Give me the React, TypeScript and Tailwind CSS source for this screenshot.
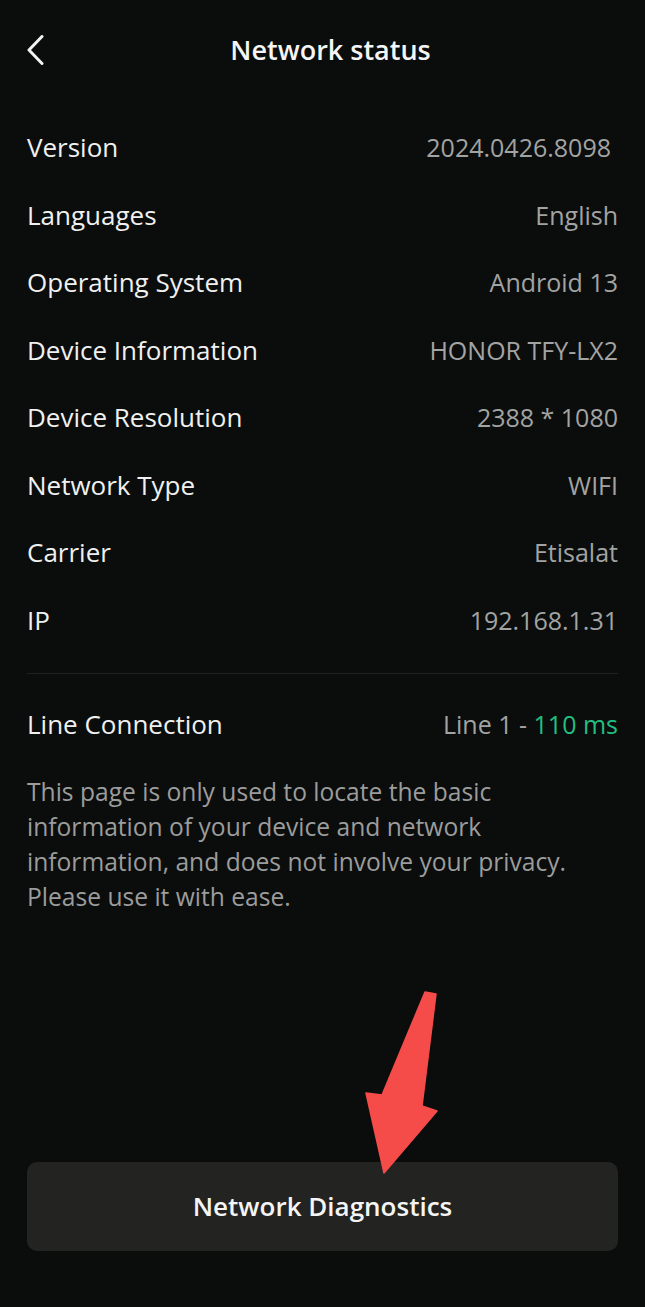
import React from "react";

const rows: Array<[string, string]> = [
  ["Version", "2024.0426.8098"],
  ["Languages", "English"],
  ["Operating System", "Android 13"],
  ["Device Information", "HONOR TFY-LX2"],
  ["Device Resolution", "2388 * 1080"],
  ["Network Type", "WIFI"],
  ["Carrier", "Etisalat"],
  ["IP", "192.168.1.31"],
];

export default function App() {
  return (
    <div
      className="relative flex min-h-[1307px] w-full flex-col bg-[#0a0d0b] px-[27px]"
      style={{ fontFamily: "'Open Sans', 'Noto Sans', sans-serif" }}
    >
      {/* Header */}
      <div className="relative flex h-[100px] items-center justify-center pl-[16px]">
        <svg
          className="absolute left-0 top-[35px]"
          width="20"
          height="30"
          viewBox="0 0 20 30"
          fill="none"
        >
          <path d="M15 1.5 L2 15 L15 28.5" stroke="#f2f2f2" strokeWidth="3" strokeLinecap="round" strokeLinejoin="round" />
        </svg>
        <h1 className="text-[27px] font-semibold text-[#f5f5f5]">Network status</h1>
      </div>

      {/* Info list */}
      <div className="flex flex-col pt-[14px]">
        {rows.map(([label, value], i) => (
          <div key={label} className="flex h-[67.5px] items-center justify-between">
            <span className="text-[26px] text-[#f0f0f0]">{label}</span>
            <span className={i === 0 ? "pr-[7px] text-[25px] text-[#a3a3a3]" : "text-[25px] text-[#a3a3a3]"}>
              {value}
            </span>
          </div>
        ))}
      </div>

      <div className="mt-[19px] h-px bg-[#1e211f]" />

      <div className="mt-[17px] flex h-[67.5px] items-center justify-between">
        <span className="text-[26px] text-[#f0f0f0]">Line Connection</span>
        <span className="text-[25px] text-[#a3a3a3]">
          Line 1 - <span className="text-[#22bf82]">110 ms</span>
        </span>
      </div>

      <p className="mt-[15px] max-w-[560px] text-[24.6px] leading-[35.3px] text-[#9c9c9c]">
        This page is only used to locate the basic information of your device and network information, and does not involve your privacy. Please use it with ease.
      </p>

      {/* Bottom action */}
      <div className="mt-auto pb-[56px]">
        <button className="flex h-[89px] w-full items-center justify-center rounded-[10px] bg-[#232422] text-[26px] font-semibold text-[#f5f5f5]">
          Network Diagnostics
        </button>
      </div>

      {/* Annotation arrow */}
      <svg
        className="pointer-events-none absolute left-0 top-0"
        width="645"
        height="1307"
        viewBox="0 0 645 1307"
      >
        <polygon
          points="425,992 436,994 422,1106 437,1111 384,1173 366,1093 382,1095"
          fill="#f54c4a"
          stroke="#f54c4a"
          strokeWidth="1.5"
          strokeLinejoin="round"
        />
      </svg>
    </div>
  );
}
